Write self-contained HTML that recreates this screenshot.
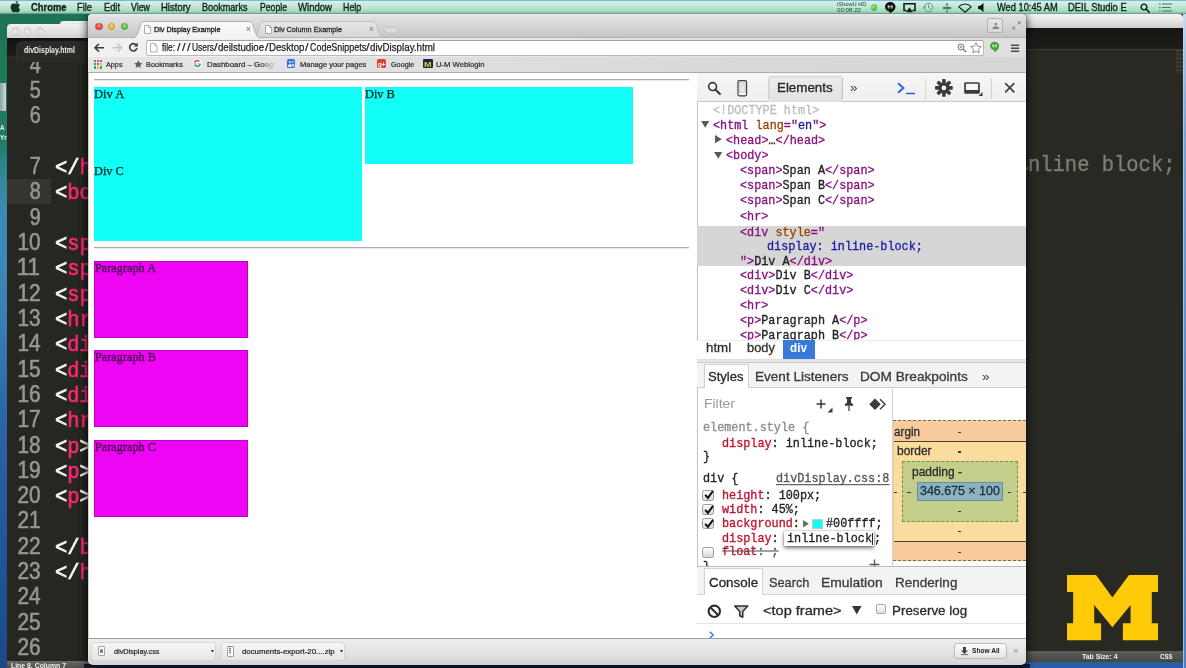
<!DOCTYPE html>
<html lang="en">
<head>
<meta charset="utf-8">
<title>Div Display Example</title>
<style>
*{box-sizing:border-box;margin:0;padding:0}
html,body{width:1186px;height:668px;overflow:hidden}
body{position:relative;font-family:"Liberation Sans",sans-serif;background:#1f4f86}
#root{position:absolute;left:0;top:0;width:1186px;height:668px;overflow:hidden;filter:blur(.55px)}
.a{position:absolute}
.t{position:absolute;white-space:pre;line-height:1}
svg{display:block;overflow:visible}

</style>
</head>
<body>
<div id="root">
<div class="a" style="left:0px;top:0px;width:1186px;height:668px;background:linear-gradient(180deg,#186348 0px,#1c7354 14px,#1e785a 60px,#207b60 140px,#2e8590 165px,#3c88ae 200px,#3f87b8 250px,#3a7eb6 320px,#2d69a8 400px,#23589b 520px,#1b4a88 668px);"></div>
<div class="a" style="left:0px;top:83px;width:6px;height:28px;background:linear-gradient(90deg,#9aa5a8,#e4e6e6);border-radius:0 1px 1px 0;opacity:.9"></div>
<span class="t" style="left:0.00px;transform-origin:0 0;top:125.00px;font-size:6.5px;color:#e8f0ee;font-weight:bold;">A</span>
<span class="t" style="left:0.00px;transform-origin:0 0;top:135.00px;font-size:6.5px;color:#e8f0ee;font-weight:bold;">Yr</span>
<div class="a" style="left:60px;top:21px;width:40px;height:6px;background:linear-gradient(180deg,#f2f2f2,#d9d9d9);border-radius:3px 0 0 0"></div>
<div class="a" style="left:7px;top:25px;width:95px;height:643px;background:#262721;border-radius:4px 0 0 0"></div>
<div class="a" style="left:7px;top:24.2px;width:95px;height:13.6px;background:linear-gradient(180deg,#f1f1f1 0,#e4e4e4 50%,#d2d2d2 100%);border-radius:4px 0 0 0;box-shadow:0 1px 0 #111"></div>
<div class="a" style="left:11.6px;top:27.4px;width:7.2px;height:7.2px;background:linear-gradient(180deg,#dcdcdc,#eeeeee);border-radius:50%;border:.8px solid #cbc6c6"></div>
<div class="a" style="left:24.2px;top:27.4px;width:7.2px;height:7.2px;background:linear-gradient(180deg,#dcdcdc,#eeeeee);border-radius:50%;border:.8px solid #cbc6c6"></div>
<div class="a" style="left:36.6px;top:27.4px;width:7.2px;height:7.2px;background:linear-gradient(180deg,#dcdcdc,#eeeeee);border-radius:50%;border:.8px solid #cbc6c6"></div>
<div class="a" style="left:7px;top:179px;width:43.5px;height:25.3px;background:#34352e;"></div>
<span class="t" style="right:1145.70px;transform-origin:100% 0;top:53.60px;font-size:23px;color:#96978f;transform:scale(0.8596,1.0);-webkit-text-stroke:.6px #96978f;">4</span>
<span class="t" style="right:1145.70px;transform-origin:100% 0;top:78.92px;font-size:23px;color:#96978f;transform:scale(0.8596,1.0);-webkit-text-stroke:.6px #96978f;">5</span>
<span class="t" style="right:1145.70px;transform-origin:100% 0;top:104.24px;font-size:23px;color:#96978f;transform:scale(0.8596,1.0);-webkit-text-stroke:.6px #96978f;">6</span>
<span class="t" style="right:1145.70px;transform-origin:100% 0;top:155.00px;font-size:23px;color:#96978f;transform:scale(0.8596,1.0);-webkit-text-stroke:.6px #96978f;">7</span>
<span class="t" style="left:54.60px;transform-origin:0 0;top:158.00px;font-size:22px;color:#f8f8f2;font-family:'Liberation Mono',monospace;transform:scaleX(.93);-webkit-text-stroke:.7px currentColor;">&lt;/<b style="font-weight:normal;color:#f92672">h</b></span>
<span class="t" style="right:1145.70px;transform-origin:100% 0;top:180.32px;font-size:23px;color:#96978f;transform:scale(0.8596,1.0);-webkit-text-stroke:.6px #96978f;">8</span>
<span class="t" style="left:54.60px;transform-origin:0 0;top:183.32px;font-size:22px;color:#f8f8f2;font-family:'Liberation Mono',monospace;transform:scaleX(.93);-webkit-text-stroke:.7px currentColor;">&lt;<b style="font-weight:normal;color:#f92672">bo</b></span>
<span class="t" style="right:1145.70px;transform-origin:100% 0;top:205.64px;font-size:23px;color:#96978f;transform:scale(0.8596,1.0);-webkit-text-stroke:.6px #96978f;">9</span>
<span class="t" style="right:1145.70px;transform-origin:100% 0;top:230.96px;font-size:23px;color:#96978f;transform:scale(0.9065,1.0);-webkit-text-stroke:.6px #96978f;">10</span>
<span class="t" style="left:54.60px;transform-origin:0 0;top:233.96px;font-size:22px;color:#f8f8f2;font-family:'Liberation Mono',monospace;transform:scaleX(.93);-webkit-text-stroke:.7px currentColor;">&lt;<b style="font-weight:normal;color:#f92672">sp</b></span>
<span class="t" style="right:1145.70px;transform-origin:100% 0;top:256.28px;font-size:23px;color:#96978f;transform:scale(0.9711,1.0);-webkit-text-stroke:.6px #96978f;">11</span>
<span class="t" style="left:54.60px;transform-origin:0 0;top:259.28px;font-size:22px;color:#f8f8f2;font-family:'Liberation Mono',monospace;transform:scaleX(.93);-webkit-text-stroke:.7px currentColor;">&lt;<b style="font-weight:normal;color:#f92672">sp</b></span>
<span class="t" style="right:1145.70px;transform-origin:100% 0;top:281.60px;font-size:23px;color:#96978f;transform:scale(0.9065,1.0);-webkit-text-stroke:.6px #96978f;">12</span>
<span class="t" style="left:54.60px;transform-origin:0 0;top:284.60px;font-size:22px;color:#f8f8f2;font-family:'Liberation Mono',monospace;transform:scaleX(.93);-webkit-text-stroke:.7px currentColor;">&lt;<b style="font-weight:normal;color:#f92672">sp</b></span>
<span class="t" style="right:1145.70px;transform-origin:100% 0;top:306.92px;font-size:23px;color:#96978f;transform:scale(0.9065,1.0);-webkit-text-stroke:.6px #96978f;">13</span>
<span class="t" style="left:54.60px;transform-origin:0 0;top:309.92px;font-size:22px;color:#f8f8f2;font-family:'Liberation Mono',monospace;transform:scaleX(.93);-webkit-text-stroke:.7px currentColor;">&lt;<b style="font-weight:normal;color:#f92672">hr</b></span>
<span class="t" style="right:1145.70px;transform-origin:100% 0;top:332.24px;font-size:23px;color:#96978f;transform:scale(0.9065,1.0);-webkit-text-stroke:.6px #96978f;">14</span>
<span class="t" style="left:54.60px;transform-origin:0 0;top:335.24px;font-size:22px;color:#f8f8f2;font-family:'Liberation Mono',monospace;transform:scaleX(.93);-webkit-text-stroke:.7px currentColor;">&lt;<b style="font-weight:normal;color:#f92672">di</b></span>
<span class="t" style="right:1145.70px;transform-origin:100% 0;top:357.56px;font-size:23px;color:#96978f;transform:scale(0.9065,1.0);-webkit-text-stroke:.6px #96978f;">15</span>
<span class="t" style="left:54.60px;transform-origin:0 0;top:360.56px;font-size:22px;color:#f8f8f2;font-family:'Liberation Mono',monospace;transform:scaleX(.93);-webkit-text-stroke:.7px currentColor;">&lt;<b style="font-weight:normal;color:#f92672">di</b></span>
<span class="t" style="right:1145.70px;transform-origin:100% 0;top:382.88px;font-size:23px;color:#96978f;transform:scale(0.9065,1.0);-webkit-text-stroke:.6px #96978f;">16</span>
<span class="t" style="left:54.60px;transform-origin:0 0;top:385.88px;font-size:22px;color:#f8f8f2;font-family:'Liberation Mono',monospace;transform:scaleX(.93);-webkit-text-stroke:.7px currentColor;">&lt;<b style="font-weight:normal;color:#f92672">di</b></span>
<span class="t" style="right:1145.70px;transform-origin:100% 0;top:408.20px;font-size:23px;color:#96978f;transform:scale(0.9065,1.0);-webkit-text-stroke:.6px #96978f;">17</span>
<span class="t" style="left:54.60px;transform-origin:0 0;top:411.20px;font-size:22px;color:#f8f8f2;font-family:'Liberation Mono',monospace;transform:scaleX(.93);-webkit-text-stroke:.7px currentColor;">&lt;<b style="font-weight:normal;color:#f92672">hr</b></span>
<span class="t" style="right:1145.70px;transform-origin:100% 0;top:433.52px;font-size:23px;color:#96978f;transform:scale(0.9065,1.0);-webkit-text-stroke:.6px #96978f;">18</span>
<span class="t" style="left:54.60px;transform-origin:0 0;top:436.52px;font-size:22px;color:#f8f8f2;font-family:'Liberation Mono',monospace;transform:scaleX(.93);-webkit-text-stroke:.7px currentColor;">&lt;<b style="font-weight:normal;color:#f92672">p<i style="font-style:normal;color:#f8f8f2">&gt;</i></b></span>
<span class="t" style="right:1145.70px;transform-origin:100% 0;top:458.84px;font-size:23px;color:#96978f;transform:scale(0.9065,1.0);-webkit-text-stroke:.6px #96978f;">19</span>
<span class="t" style="left:54.60px;transform-origin:0 0;top:461.84px;font-size:22px;color:#f8f8f2;font-family:'Liberation Mono',monospace;transform:scaleX(.93);-webkit-text-stroke:.7px currentColor;">&lt;<b style="font-weight:normal;color:#f92672">p<i style="font-style:normal;color:#f8f8f2">&gt;</i></b></span>
<span class="t" style="right:1145.70px;transform-origin:100% 0;top:484.16px;font-size:23px;color:#96978f;transform:scale(0.9065,1.0);-webkit-text-stroke:.6px #96978f;">20</span>
<span class="t" style="left:54.60px;transform-origin:0 0;top:487.16px;font-size:22px;color:#f8f8f2;font-family:'Liberation Mono',monospace;transform:scaleX(.93);-webkit-text-stroke:.7px currentColor;">&lt;<b style="font-weight:normal;color:#f92672">p<i style="font-style:normal;color:#f8f8f2">&gt;</i></b></span>
<span class="t" style="right:1145.70px;transform-origin:100% 0;top:509.48px;font-size:23px;color:#96978f;transform:scale(0.9065,1.0);-webkit-text-stroke:.6px #96978f;">21</span>
<span class="t" style="right:1145.70px;transform-origin:100% 0;top:534.80px;font-size:23px;color:#96978f;transform:scale(0.9065,1.0);-webkit-text-stroke:.6px #96978f;">22</span>
<span class="t" style="left:54.60px;transform-origin:0 0;top:537.80px;font-size:22px;color:#f8f8f2;font-family:'Liberation Mono',monospace;transform:scaleX(.93);-webkit-text-stroke:.7px currentColor;">&lt;/<b style="font-weight:normal;color:#f92672">b</b></span>
<span class="t" style="right:1145.70px;transform-origin:100% 0;top:560.12px;font-size:23px;color:#96978f;transform:scale(0.9065,1.0);-webkit-text-stroke:.6px #96978f;">23</span>
<span class="t" style="left:54.60px;transform-origin:0 0;top:563.12px;font-size:22px;color:#f8f8f2;font-family:'Liberation Mono',monospace;transform:scaleX(.93);-webkit-text-stroke:.7px currentColor;">&lt;/<b style="font-weight:normal;color:#f92672">h</b></span>
<span class="t" style="right:1145.70px;transform-origin:100% 0;top:585.44px;font-size:23px;color:#96978f;transform:scale(0.9065,1.0);-webkit-text-stroke:.6px #96978f;">24</span>
<span class="t" style="right:1145.70px;transform-origin:100% 0;top:610.76px;font-size:23px;color:#96978f;transform:scale(0.9065,1.0);-webkit-text-stroke:.6px #96978f;">25</span>
<span class="t" style="right:1145.70px;transform-origin:100% 0;top:636.08px;font-size:23px;color:#96978f;transform:scale(0.9065,1.0);-webkit-text-stroke:.6px #96978f;">26</span>
<div class="a" style="left:7px;top:38px;width:95px;height:23.5px;background:#272822;"></div>
<div class="a" style="left:7px;top:38px;width:95px;height:18px;background:linear-gradient(180deg,#121210,#1d1d1a);"></div>
<div class="a" style="left:17px;top:42px;width:90px;height:19.5px;background:#2a2b25;border-radius:6px 0 0 0;box-shadow:-1px -1px 1px rgba(90,90,80,.35)"></div>
<span class="t" style="left:23.60px;transform-origin:0 0;top:45.70px;font-size:8.6px;color:#ecece6;font-weight:bold;transform:scale(0.8111,1.0);">divDisplay.html</span>
<div class="a" style="left:7px;top:660.5px;width:95px;height:8px;background:linear-gradient(180deg,#6c6c6a,#4a4a48);"></div>
<span class="t" style="left:10.50px;transform-origin:0 0;top:661.80px;font-size:7.4px;color:#f0f0f0;font-weight:bold;transform:scale(0.9300,1.0);">Line 8, Column 7</span>
<div class="a" style="left:1020px;top:14px;width:163px;height:648px;background:#282923;"></div>
<div class="a" style="left:1020px;top:14px;width:163px;height:14px;background:linear-gradient(180deg,#f4f4f4 0,#e6e6e6 45%,#cdcdcd 100%);border-radius:0 4px 0 0"></div>
<div class="a" style="left:1020px;top:28px;width:163px;height:20.5px;background:linear-gradient(180deg,#151513,#1c1c19);"></div>
<div class="a" style="left:1020px;top:48.5px;width:163px;height:0.8px;background:#3a3a35;"></div>
<div class="a" style="left:1176px;top:50px;width:7px;height:24px;background:repeating-linear-gradient(180deg,#5a5b55 0,#5a5b55 1.500px,#34352f 1.500px,#34352f 4px);opacity:.55"></div>
<span class="t" style="left:1028.20px;transform-origin:0 0;top:155.30px;font-size:22px;color:#7e7e73;font-family:'Liberation Mono',monospace;transform:scale(0.9310,1.0);-webkit-text-stroke:.35px #7e7e73;">nline block;</span>
<div class="a" style="left:1026px;top:166.5px;width:1.6px;height:3.5px;background:#6a6a60;"></div>
<div class="a" style="left:1020px;top:651px;width:163px;height:11px;background:linear-gradient(180deg,#5d5d5b,#454543);"></div>
<span class="t" style="left:1081.80px;transform-origin:0 0;top:653.30px;font-size:7.2px;color:#f2f2f2;font-weight:bold;transform:scale(0.9591,1.0);">Tab Size: 4</span>
<span class="t" style="left:1159.80px;transform-origin:0 0;top:653.30px;font-size:7.2px;color:#f2f2f2;font-weight:bold;transform:scale(0.8457,1.0);">CSS</span>
<div class="a" style="left:1026px;top:662px;width:157px;height:6px;background:#2b5ca6;"></div>
<svg class="a" style="left:1066.5px;top:574.800px" width="91" height="65.200" viewBox="0 0 910 652"><path fill="#ffcb08" d="M0 0H291L454 224 620 0H910V170H848V482H910V652H559V482H636V300L454 522 272 300V482H341V652H0V482H62V170H0Z"/></svg>
<div class="a" style="left:1182.6px;top:14px;width:3.4px;height:654px;background:linear-gradient(180deg,#c9dcf0 0,#a4c2e6 6%,#7aa2d6 18%,#628ecb 50%,#4f7fc0 100%);border-left:.8px solid rgba(200,215,235,.7)"></div>
<div class="a" style="left:88px;top:14.3px;width:937.5999999999999px;height:650.7px;background:#fff;border-radius:4px 4px 5px 5px;box-shadow:0 2px 9px 1px rgba(0,0,0,.75),0 0 1px #000"></div>
<div class="a" style="left:88px;top:14.3px;width:937.5999999999999px;height:23px;background:linear-gradient(180deg,#ececec 0,#e0e0e0 15%,#d3d3d3 60%,#c6c6c6 100%);border-radius:4px 4px 0 0"></div>
<div class="a" style="left:95.3px;top:22.6px;width:7.4px;height:7.4px;background:radial-gradient(circle at 50% 30%,#ff8e86,#e8453c 70%);border-radius:50%;border:.7px solid #c9342c"></div>
<div class="a" style="left:107.89999999999999px;top:22.6px;width:7.4px;height:7.4px;background:radial-gradient(circle at 50% 30%,#ffd982,#f0b02a 70%);border-radius:50%;border:.7px solid #cf9421"></div>
<div class="a" style="left:120.6px;top:22.6px;width:7.4px;height:7.4px;background:radial-gradient(circle at 50% 30%,#a6e58b,#5bbf3f 70%);border-radius:50%;border:.7px solid #469d30"></div>
<svg class="a" style="left:250px;top:20.500px" width="140" height="17" viewBox="0 0 140 17"><defs><linearGradient id="g2" x1="0" y1="0" x2="0" y2="1"><stop offset="0" stop-color="#e6e6e6"/><stop offset="1" stop-color="#d5d5d5"/></linearGradient></defs><path d="M2 17 C6 17 7 14 8.500 9 L10 4 C10.800 1.200 12 .5 14 .5 H122.500 C124.500 .5 125.700 1.200 126.500 4 L128 9 C129.500 14 130.500 17 134.500 17Z" fill="url(#g2)" stroke="#b3b3b3" stroke-width=".7"/></svg>
<svg class="a" style="left:382.500px;top:25.800px" width="16.500" height="8" viewBox="0 0 20 9"><path d="M1 .8H14.500C15.500 .8 16 1.200 16.400 2.200L18.600 7.200C19 8 18.500 8.400 17.800 8.400H4.600C3.600 8.400 3.100 8 2.700 7L.5 2C.1 1.200.3.8 1 .8Z" fill="#dadada" stroke="#b2b2b2" stroke-width=".7"/></svg>
<div class="a" style="left:88px;top:37px;width:937.5999999999999px;height:19.5px;background:linear-gradient(90deg,#f1f1f1 0,#ededed 25%,#e2e2e2 60%,#dfdfdf 100%);border-top:.8px solid #b3b3b3"></div>
<svg class="a" style="left:132px;top:20.500px" width="134" height="17.500" viewBox="0 0 134 17.500"><defs><linearGradient id="g1" x1="0" y1="0" x2="0" y2="1"><stop offset="0" stop-color="#f8f8f8"/><stop offset="1" stop-color="#f2f2f2"/></linearGradient></defs><path d="M0 17 C4 17 5.500 14 7 9 L8.500 4 C9.300 1.200 10.500 .5 12.500 .5 H117 C119 .5 120.200 1.200 121 4 L122.500 9 C124 14 125.500 17 129.500 17 V17.500 H0Z" fill="url(#g1)"/><path d="M0 17 C4 17 5.500 14 7 9 L8.500 4 C9.300 1.200 10.500 .5 12.500 .5 H117 C119 .5 120.200 1.200 121 4 L122.500 9 C124 14 125.500 17 129.500 17" fill="none" stroke="#a3a3a3" stroke-width=".8"/></svg>
<svg class="a" style="left:144.2px;top:24.5px" width="7" height="9" viewBox="0 0 14 18"><path d="M1 1h8l4 4v12H1z" fill="#fdfdfd" stroke="#8d8d8d" stroke-width="1.400"/><path d="M9 1v4h4" fill="none" stroke="#8d8d8d" stroke-width="1.200"/></svg>
<span class="t" style="left:153.90px;transform-origin:0 0;top:25.60px;font-size:7.7px;color:#222;transform:scale(0.9433,1.0);-webkit-text-stroke:.32px #222;">Div Display Example</span>
<span class="t" style="left:245.50px;transform-origin:0 0;top:24.80px;font-size:9px;color:#6a6a6a;transform:scale(0.9496,1.0);">×</span>
<svg class="a" style="left:264.5px;top:24.5px" width="7" height="9" viewBox="0 0 14 18"><path d="M1 1h8l4 4v12H1z" fill="#fdfdfd" stroke="#8d8d8d" stroke-width="1.400"/><path d="M9 1v4h4" fill="none" stroke="#8d8d8d" stroke-width="1.200"/></svg>
<span class="t" style="left:274.30px;transform-origin:0 0;top:25.60px;font-size:7.7px;color:#2c2c2c;transform:scale(0.9473,1.0);-webkit-text-stroke:.3px #2c2c2c;">Div Column Example</span>
<span class="t" style="left:368.50px;transform-origin:0 0;top:24.80px;font-size:9px;color:#777;transform:scale(0.9496,1.0);">×</span>
<div class="a" style="left:987.4px;top:18.2px;width:15.8px;height:14.8px;background:linear-gradient(180deg,#e6e6e6,#d6d6d6);border:.8px solid #b2b2b2;border-radius:2px"></div>
<svg class="a" style="left:991.600px;top:22px" width="7.500" height="7.500" viewBox="0 0 15 15"><circle cx="7.500" cy="4" r="2.600" fill="#808080"/><path d="M1 14c0-4 3-5.500 6.500-5.500S14 10 14 14z" fill="#808080"/></svg>
<svg class="a" style="left:1011.500px;top:20.500px" width="9" height="9" viewBox="0 0 18 18"><path d="M10.500 1H17v6.500zM7.500 17H1v-6.500z" fill="#8a8a8a"/><path d="M16 2l-5 5M2 16l5-5" stroke="#8a8a8a" stroke-width="2"/></svg>
<svg class="a" style="left:93.800px;top:42.800px" width="10.500" height="9.500" viewBox="0 0 21 19"><path d="M10 1.500L2 9.500l8 8M2.500 9.500H20" fill="none" stroke="#3c3c3c" stroke-width="3.200"/></svg>
<svg class="a" style="left:111.500px;top:42.800px" width="10.500" height="9.500" viewBox="0 0 21 19"><path d="M11 1.500l8 8-8 8M18.500 9.500H1" fill="none" stroke="#c4c4c4" stroke-width="3.200"/></svg>
<svg class="a" style="left:127.800px;top:42.300px" width="10.500" height="10.500" viewBox="0 0 21 21"><path d="M16.500 6.200A7.300 7.300 0 1 0 17.800 12" fill="none" stroke="#3c3c3c" stroke-width="3.200"/><path d="M19.500 1v8h-8z" fill="#3c3c3c"/></svg>
<div class="a" style="left:145.5px;top:39.6px;width:838px;height:16px;background:#fff;border:.8px solid #b9b9b9;border-top-color:#a2a2a2;border-radius:2.500px"></div>
<svg class="a" style="left:150.300px;top:43px" width="7.500" height="9.500" viewBox="0 0 15 19"><path d="M1 1h8.500l4.500 4.500V18H1z" fill="#fff" stroke="#909090" stroke-width="1.400"/><path d="M9.500 1v4.500H14" fill="none" stroke="#909090" stroke-width="1.200"/></svg>
<span class="t" style="left:161.90px;transform-origin:0 0;top:42.30px;font-size:10.9px;color:#1c1c1c;transform:scale(0.7727,1.0);-webkit-text-stroke:.25px #1c1c1c;">file:</span>
<span class="t" style="left:192.00px;transform-origin:0 0;top:42.30px;font-size:10.9px;color:#1c1c1c;transform:scale(0.7732,1.0);-webkit-text-stroke:.25px #1c1c1c;">Users</span>
<span class="t" style="left:217.90px;transform-origin:0 0;top:42.30px;font-size:10.9px;color:#1c1c1c;transform:scale(0.8852,1.0);-webkit-text-stroke:.25px #1c1c1c;">deilstudioe</span>
<span class="t" style="left:269.00px;transform-origin:0 0;top:42.30px;font-size:10.9px;color:#1c1c1c;transform:scale(0.8885,1.0);-webkit-text-stroke:.25px #1c1c1c;">Desktop</span>
<span class="t" style="left:309.60px;transform-origin:0 0;top:42.30px;font-size:10.9px;color:#1c1c1c;transform:scale(0.8199,1.0);-webkit-text-stroke:.25px #1c1c1c;">CodeSnippets</span>
<span class="t" style="left:370.30px;transform-origin:0 0;top:42.30px;font-size:10.9px;color:#1c1c1c;transform:scale(0.8975,1.0);-webkit-text-stroke:.25px #1c1c1c;">divDisplay.html</span>
<span class="t" style="left:177.00px;transform-origin:0 0;top:42.30px;font-size:10.9px;color:#1c1c1c;-webkit-text-stroke:.2px #1c1c1c;transform:scaleX(1.15);">/</span>
<span class="t" style="left:181.90px;transform-origin:0 0;top:42.30px;font-size:10.9px;color:#1c1c1c;-webkit-text-stroke:.2px #1c1c1c;transform:scaleX(1.15);">/</span>
<span class="t" style="left:186.80px;transform-origin:0 0;top:42.30px;font-size:10.9px;color:#1c1c1c;-webkit-text-stroke:.2px #1c1c1c;transform:scaleX(1.15);">/</span>
<span class="t" style="left:214.40px;transform-origin:0 0;top:42.30px;font-size:10.9px;color:#1c1c1c;-webkit-text-stroke:.2px #1c1c1c;transform:scaleX(1.15);">/</span>
<span class="t" style="left:264.60px;transform-origin:0 0;top:42.30px;font-size:10.9px;color:#1c1c1c;-webkit-text-stroke:.2px #1c1c1c;transform:scaleX(1.15);">/</span>
<span class="t" style="left:305.20px;transform-origin:0 0;top:42.30px;font-size:10.9px;color:#1c1c1c;-webkit-text-stroke:.2px #1c1c1c;transform:scaleX(1.15);">/</span>
<span class="t" style="left:366.30px;transform-origin:0 0;top:42.30px;font-size:10.9px;color:#1c1c1c;-webkit-text-stroke:.2px #1c1c1c;transform:scaleX(1.15);">/</span>
<svg class="a" style="left:957px;top:43px" width="10" height="10" viewBox="0 0 20 20"><circle cx="8" cy="8" r="6" fill="none" stroke="#777" stroke-width="2"/><path d="M12.500 12.500l6 6" stroke="#777" stroke-width="2.600"/><path d="M5 8h6M8 5v6" stroke="#777" stroke-width="1.600"/></svg>
<svg class="a" style="left:969.500px;top:42px" width="12" height="11.500" viewBox="0 0 24 23"><path d="M12 1.500l3.200 6.800 7.300.9-5.400 5.100 1.400 7.400-6.500-3.700-6.500 3.700 1.400-7.400L1.500 9.200l7.300-.9z" fill="#fff" stroke="#7d7d7d" stroke-width="1.700" stroke-linejoin="round"/></svg>
<svg class="a" style="left:990.200px;top:41.200px" width="9.200" height="11.800" viewBox="0 0 21 24"><path fill="#43a738" d="M10.500 0C4.700 0 0 4.300 0 9.700c0 5 4.100 9.100 9.300 9.600V24c5.800-2.600 11.700-7.300 11.700-14.300C21 4.300 16.300 0 10.500 0z"/><path fill="#eaf6e8" d="M5.300 7h4v4c0 1.500-.8 2.500-2.200 2.800v-1.300c.5-.3.700-.8.700-1.500H5.300zM11.300 7h4v4c0 1.500-.8 2.500-2.200 2.800v-1.300c.5-.3.700-.8.700-1.500h-2.500z"/></svg>
<svg class="a" style="left:1011.200px;top:43.500px" width="8.200" height="8.400" viewBox="0 0 18 18"><path d="M0 2.500h18M0 9h18M0 15.500h18" stroke="#4a4a4a" stroke-width="3.200"/></svg>
<div class="a" style="left:88px;top:56.5px;width:937.5999999999999px;height:16.8px;background:linear-gradient(90deg,#e6e6e6 0,#e0e0e0 30%,#d9d9d9 70%,#d7d7d7 100%);border-bottom:.9px solid #adadad"></div>
<div class="a" style="left:93.6px;top:60.2px;width:2.2px;height:2.2px;background:#e8453c;"></div>
<div class="a" style="left:96.69999999999999px;top:60.2px;width:2.2px;height:2.2px;background:#3f83f8;"></div>
<div class="a" style="left:99.8px;top:60.2px;width:2.2px;height:2.2px;background:#e8453c;"></div>
<div class="a" style="left:93.6px;top:63.300000000000004px;width:2.2px;height:2.2px;background:#3f83f8;"></div>
<div class="a" style="left:96.69999999999999px;top:63.300000000000004px;width:2.2px;height:2.2px;background:#e8453c;"></div>
<div class="a" style="left:99.8px;top:63.300000000000004px;width:2.2px;height:2.2px;background:#f2b635;"></div>
<div class="a" style="left:93.6px;top:66.4px;width:2.2px;height:2.2px;background:#3aa757;"></div>
<div class="a" style="left:96.69999999999999px;top:66.4px;width:2.2px;height:2.2px;background:#f2b635;"></div>
<div class="a" style="left:99.8px;top:66.4px;width:2.2px;height:2.2px;background:#3aa757;"></div>
<span class="t" style="left:106.00px;transform-origin:0 0;top:61.00px;font-size:7.6px;color:#2d2d2d;transform:scale(0.9531,1.0);-webkit-text-stroke:.22px #2d2d2d;">Apps</span>
<svg class="a" style="left:134px;top:59.500px" width="8.500" height="8.500" viewBox="0 0 24 23"><path d="M12 0l3.500 7.600 8 .9-5.900 5.600 1.600 8.100L12 18.100 4.800 22.200l1.600-8.100L.5 8.500l8-.9z" fill="#5e5e5e"/></svg>
<span class="t" style="left:146.30px;transform-origin:0 0;top:61.00px;font-size:7.6px;color:#2d2d2d;transform:scale(0.9715,1.0);-webkit-text-stroke:.22px #2d2d2d;">Bookmarks</span>
<svg class="a" style="left:193px;top:59.300px" width="9" height="9" viewBox="0 0 18 18"><circle cx="9" cy="9" r="9" fill="#fff"/><path d="M9 3.200a5.800 5.800 0 1 0 5.700 6.800H9" fill="none" stroke="#4a86e8" stroke-width="2.400"/><path d="M3.900 6.200A5.800 5.800 0 0 1 13.200 5" fill="none" stroke="#e8453c" stroke-width="2.400"/><path d="M3.900 11.800A5.800 5.800 0 0 1 3.900 6.200" fill="none" stroke="#f2b635" stroke-width="2.400"/><path d="M3.900 11.800A5.800 5.800 0 0 0 12.500 13.600" fill="none" stroke="#3aa757" stroke-width="2.400"/></svg>
<span class="t" style="left:206.50px;transform-origin:0 0;top:61.00px;font-size:7.6px;color:#2d2d2d;transform:scale(1.0325,1.0);-webkit-text-stroke:.22px #2d2d2d;-webkit-mask-image:linear-gradient(90deg,#000 78%,transparent 100%);">Dashboard – Googl</span>
<div class="a" style="left:286.5px;top:59.3px;width:8.5px;height:9px;background:#3d6fd6;border-radius:1.500px"></div>
<svg class="a" style="left:287.500px;top:60.300px" width="6.500" height="7" viewBox="0 0 13 14"><circle cx="4" cy="4" r="2.200" fill="#dfe9fb"/><circle cx="9.500" cy="3.500" r="1.800" fill="#b9cdf3"/><path d="M0 14c0-4 1.500-6 4-6s4 2 4 6zM8 8c3-1 5 1 5 5H9.500z" fill="#dfe9fb"/></svg>
<span class="t" style="left:299.60px;transform-origin:0 0;top:61.00px;font-size:7.6px;color:#2d2d2d;transform:scale(0.9877,1.0);-webkit-text-stroke:.22px #2d2d2d;">Manage your pages</span>
<div class="a" style="left:376.8px;top:59.3px;width:9px;height:9px;background:#dc4437;border-radius:1.500px"></div>
<span class="t" style="left:377.60px;transform-origin:0 0;top:60.60px;font-size:7px;color:#fff;font-weight:bold;transform:scale(0.8836,1.0);">g+</span>
<span class="t" style="left:390.50px;transform-origin:0 0;top:61.00px;font-size:7.6px;color:#2d2d2d;transform:scale(0.9510,1.0);-webkit-text-stroke:.22px #2d2d2d;">Google</span>
<div class="a" style="left:423px;top:59.3px;width:9.5px;height:9px;background:#0d2a52;border-radius:1px"></div>
<span class="t" style="left:424.00px;transform-origin:0 0;top:61.00px;font-size:8px;color:#ffcb05;font-weight:bold;transform:scale(1.1241,1.0);">M</span>
<span class="t" style="left:436.20px;transform-origin:0 0;top:61.00px;font-size:7.6px;color:#2d2d2d;transform:scale(1.0087,1.0);-webkit-text-stroke:.22px #2d2d2d;">U-M Weblogin</span>
<div class="a" style="left:88px;top:73.3px;width:609px;height:565.2px;background:#fff;"></div>
<div class="a" style="left:88px;top:73.3px;width:1.2px;height:565px;background:#d0d0d0;"></div>
<div class="a" style="left:94.2px;top:78.8px;width:594.5px;height:2px;background:transparent;border-top:1px solid #ababab;border-bottom:1px solid #e9e9e9"></div>
<div class="a" style="left:94.2px;top:86.6px;width:267.4px;height:154.5px;background:#12fff7;"></div>
<div class="a" style="left:365px;top:86.6px;width:267.8px;height:77.3px;background:#12fff7;"></div>
<span class="t" style="left:94.20px;transform-origin:0 0;top:88.40px;font-size:12.5px;color:#052222;font-family:'Liberation Serif',serif;transform:scale(1.0027,1.0);-webkit-text-stroke:.25px #052222;">Div A</span>
<span class="t" style="left:365.00px;transform-origin:0 0;top:88.40px;font-size:12.5px;color:#052222;font-family:'Liberation Serif',serif;transform:scale(0.9861,1.0);-webkit-text-stroke:.25px #052222;">Div B</span>
<span class="t" style="left:94.20px;transform-origin:0 0;top:165.30px;font-size:12.5px;color:#052222;font-family:'Liberation Serif',serif;transform:scale(0.9861,1.0);-webkit-text-stroke:.25px #052222;">Div C</span>
<div class="a" style="left:94.2px;top:246.8px;width:594.5px;height:2px;background:transparent;border-top:1px solid #ababab;border-bottom:1px solid #e9e9e9"></div>
<div class="a" style="left:94.3px;top:261px;width:154.2px;height:77px;background:#ee05f3;box-shadow:inset 0 0 0 1px rgba(150,0,160,.55)"></div>
<span class="t" style="left:94.60px;transform-origin:0 0;top:261.70px;font-size:12.5px;color:#36003f;font-family:'Liberation Serif',serif;transform:scale(0.9816,1.0);filter:blur(.6px);-webkit-text-stroke:.4px #36003f;opacity:.85;">Paragraph A</span>
<div class="a" style="left:94.3px;top:350.4px;width:154.2px;height:77px;background:#ee05f3;box-shadow:inset 0 0 0 1px rgba(150,0,160,.55)"></div>
<span class="t" style="left:94.60px;transform-origin:0 0;top:351.10px;font-size:12.5px;color:#36003f;font-family:'Liberation Serif',serif;transform:scale(0.9816,1.0);filter:blur(.6px);-webkit-text-stroke:.4px #36003f;opacity:.85;">Paragraph B</span>
<div class="a" style="left:94.3px;top:439.8px;width:154.2px;height:77px;background:#ee05f3;box-shadow:inset 0 0 0 1px rgba(150,0,160,.55)"></div>
<span class="t" style="left:94.60px;transform-origin:0 0;top:440.50px;font-size:12.5px;color:#36003f;font-family:'Liberation Serif',serif;transform:scale(0.9816,1.0);filter:blur(.6px);-webkit-text-stroke:.4px #36003f;opacity:.85;">Paragraph C</span>
<div class="a" style="left:697.2px;top:73.3px;width:328.39999999999986px;height:565.2px;background:#fff;"></div>
<div class="a" style="left:696.6px;top:73.3px;width:1.1px;height:565.2px;background:#c2c2c2;"></div>
<div class="a" style="left:697.2px;top:73.3px;width:328.39999999999986px;height:28.5px;background:linear-gradient(180deg,#f6f6f6,#efefef);border-bottom:.9px solid #c9c9c9"></div>
<svg class="a" style="left:706.800px;top:81.300px" width="14" height="14" viewBox="0 0 25 25"><circle cx="10" cy="10" r="7" fill="none" stroke="#3b3b3b" stroke-width="3"/><path d="M15.500 15.500l7.500 7.500" stroke="#3b3b3b" stroke-width="3.800" stroke-linecap="round"/></svg>
<svg class="a" style="left:737.300px;top:79.800px" width="10.500" height="16.500" viewBox="0 0 17 28"><rect x="1.200" y="1.200" width="14.600" height="25.600" rx="2.500" fill="#fff" stroke="#3b3b3b" stroke-width="2"/><rect x="3.800" y="4.500" width="9.400" height="16" fill="#e9e9e9" stroke="#9a9a9a" stroke-width=".8"/><path d="M6 12l5-5" stroke="#aaa" stroke-width="1"/></svg>
<div class="a" style="left:768px;top:77.5px;width:0.9px;height:21px;background:#cfcfcf;"></div>
<div class="a" style="left:768.9px;top:76px;width:73px;height:25.8px;background:linear-gradient(180deg,#ececec,#e2e2e2);box-shadow:inset 0 1px 2px rgba(0,0,0,.12)"></div>
<div class="a" style="left:842px;top:77.5px;width:0.9px;height:21px;background:#c4c4c4;"></div>
<span class="t" style="left:776.90px;transform-origin:0 0;top:81.30px;font-size:13.6px;color:#262626;transform:scale(0.9811,1.0);-webkit-text-stroke:.32px #262626;">Elements</span>
<span class="t" style="left:850.20px;transform-origin:0 0;top:81.30px;font-size:13.5px;color:#3b3b3b;transform:scale(0.9979,1.0);">»</span>
<svg class="a" style="left:896.500px;top:81.500px" width="18.500" height="12.500" viewBox="0 0 37 25"><path d="M2 2.500l11 9.500-11 9.500" fill="none" stroke="#2d5fd0" stroke-width="3.600" stroke-linejoin="miter"/><path d="M18 23h18" stroke="#2d5fd0" stroke-width="3"/></svg>
<div class="a" style="left:925px;top:77.5px;width:0.9px;height:21px;background:#d6d6d6;"></div>
<svg class="a" style="left:934.800px;top:79.300px" width="17.800" height="17.800" viewBox="0 0 30 30"><g fill="#3b3b3b"><circle cx="15" cy="15" r="9.500"/><g id="tth"><rect x="12" y="0" width="6" height="30" rx="1.500"/></g><rect x="12" y="0" width="6" height="30" rx="1.500" transform="rotate(45 15 15)"/><rect x="12" y="0" width="6" height="30" rx="1.500" transform="rotate(90 15 15)"/><rect x="12" y="0" width="6" height="30" rx="1.500" transform="rotate(135 15 15)"/></g><circle cx="15" cy="15" r="4" fill="#f2f2f2"/></svg>
<svg class="a" style="left:964px;top:81.500px" width="19" height="14" viewBox="0 0 38 28"><rect x="2" y="2" width="28" height="20" rx="1.500" fill="#f5f5f5" stroke="#3b3b3b" stroke-width="3.400"/><rect x="2" y="16" width="28" height="6" fill="#3b3b3b"/><path d="M37 20v8h-8z" fill="#3b3b3b"/></svg>
<div class="a" style="left:990.5px;top:77.5px;width:0.9px;height:21px;background:#cfcfcf;"></div>
<svg class="a" style="left:1004px;top:82.300px" width="11.500" height="11.500" viewBox="0 0 20 20"><path d="M2 2l16 16M18 2L2 18" stroke="#3b3b3b" stroke-width="2.800"/></svg>
<div class="a" style="left:697.2px;top:225.6px;width:328.39999999999986px;height:40.8px;background:#d6d6d6;"></div>
<span class="t" style="left:712.80px;transform-origin:0 0;top:104.92px;font-size:11.8px;color:#bdbdbd;font-family:'Liberation Mono',monospace;transform:scale(1.0007,1.11);-webkit-text-stroke:.3px currentColor;">&lt;!DOCTYPE html&gt;</span>
<svg class="a" style="left:700.5px;top:121.39999999999999px" width="8.400" height="6.800" viewBox="0 0 12 10"><path d="M0 0h12L6 10z" fill="#5a5a5a"/></svg>
<span class="t" style="left:712.80px;transform-origin:0 0;top:119.52px;font-size:11.8px;color:#222;font-family:'Liberation Mono',monospace;transform:scale(1.0001,1.11);-webkit-text-stroke:.3px currentColor;"><i style="font-style:normal;color:#881280">&lt;html </i><i style="font-style:normal;color:#994500">lang</i><i style="font-style:normal;color:#881280">=</i><i style="font-style:normal;color:#881280">"</i><i style="font-style:normal;color:#1a1aa6">en</i><i style="font-style:normal;color:#881280">"&gt;</i></span>
<svg class="a" style="left:714.8px;top:135.4px" width="6.800" height="8.400" viewBox="0 0 10 12"><path d="M0 0v12l10-6z" fill="#5a5a5a"/></svg>
<span class="t" style="left:726.40px;transform-origin:0 0;top:134.62px;font-size:11.8px;color:#222;font-family:'Liberation Mono',monospace;transform:scale(1.0005,1.11);-webkit-text-stroke:.3px currentColor;"><i style="font-style:normal;color:#881280">&lt;head&gt;</i><i style="font-style:normal;color:#222">…</i><i style="font-style:normal;color:#881280">&lt;/head&gt;</i></span>
<svg class="a" style="left:713.6999999999999px;top:151.70000000000002px" width="8.400" height="6.800" viewBox="0 0 12 10"><path d="M0 0h12L6 10z" fill="#5a5a5a"/></svg>
<span class="t" style="left:726.40px;transform-origin:0 0;top:149.82px;font-size:11.8px;color:#222;font-family:'Liberation Mono',monospace;transform:scale(1.0006,1.11);-webkit-text-stroke:.3px currentColor;"><i style="font-style:normal;color:#881280">&lt;body&gt;</i></span>
<span class="t" style="left:739.50px;transform-origin:0 0;top:165.42px;font-size:11.8px;color:#222;font-family:'Liberation Mono',monospace;transform:scale(1.0006,1.11);-webkit-text-stroke:.3px currentColor;"><i style="font-style:normal;color:#881280">&lt;span&gt;</i><i style="font-style:normal;color:#222">Span A</i><i style="font-style:normal;color:#881280">&lt;/span&gt;</i></span>
<span class="t" style="left:739.50px;transform-origin:0 0;top:180.42px;font-size:11.8px;color:#222;font-family:'Liberation Mono',monospace;transform:scale(1.0006,1.11);-webkit-text-stroke:.3px currentColor;"><i style="font-style:normal;color:#881280">&lt;span&gt;</i><i style="font-style:normal;color:#222">Span B</i><i style="font-style:normal;color:#881280">&lt;/span&gt;</i></span>
<span class="t" style="left:739.50px;transform-origin:0 0;top:195.42px;font-size:11.8px;color:#222;font-family:'Liberation Mono',monospace;transform:scale(1.0006,1.11);-webkit-text-stroke:.3px currentColor;"><i style="font-style:normal;color:#881280">&lt;span&gt;</i><i style="font-style:normal;color:#222">Span C</i><i style="font-style:normal;color:#881280">&lt;/span&gt;</i></span>
<span class="t" style="left:739.50px;transform-origin:0 0;top:210.72px;font-size:11.8px;color:#222;font-family:'Liberation Mono',monospace;transform:scale(1.0004,1.11);-webkit-text-stroke:.3px currentColor;"><i style="font-style:normal;color:#881280">&lt;hr&gt;</i></span>
<span class="t" style="left:739.50px;transform-origin:0 0;top:226.62px;font-size:11.8px;color:#222;font-family:'Liberation Mono',monospace;transform:scale(1.0004,1.11);-webkit-text-stroke:.3px currentColor;"><i style="font-style:normal;color:#881280">&lt;div </i><i style="font-style:normal;color:#994500">style</i><i style="font-style:normal;color:#881280">="</i></span>
<span class="t" style="left:767.30px;transform-origin:0 0;top:241.42px;font-size:11.8px;color:#222;font-family:'Liberation Mono',monospace;transform:scale(1.0008,1.11);-webkit-text-stroke:.3px currentColor;"><i style="font-style:normal;color:#1a1aa6">display: inline-block;</i></span>
<span class="t" style="left:739.50px;transform-origin:0 0;top:255.52px;font-size:11.8px;color:#222;font-family:'Liberation Mono',monospace;transform:scale(1.0005,1.11);-webkit-text-stroke:.3px currentColor;"><i style="font-style:normal;color:#881280">"&gt;</i><i style="font-style:normal;color:#222">Div A</i><i style="font-style:normal;color:#881280">&lt;/div&gt;</i></span>
<span class="t" style="left:739.50px;transform-origin:0 0;top:270.12px;font-size:11.8px;color:#222;font-family:'Liberation Mono',monospace;transform:scale(1.0006,1.11);-webkit-text-stroke:.3px currentColor;"><i style="font-style:normal;color:#881280">&lt;div&gt;</i><i style="font-style:normal;color:#222">Div B</i><i style="font-style:normal;color:#881280">&lt;/div&gt;</i></span>
<span class="t" style="left:739.50px;transform-origin:0 0;top:285.12px;font-size:11.8px;color:#222;font-family:'Liberation Mono',monospace;transform:scale(1.0006,1.11);-webkit-text-stroke:.3px currentColor;"><i style="font-style:normal;color:#881280">&lt;div&gt;</i><i style="font-style:normal;color:#222">Div C</i><i style="font-style:normal;color:#881280">&lt;/div&gt;</i></span>
<span class="t" style="left:739.50px;transform-origin:0 0;top:300.12px;font-size:11.8px;color:#222;font-family:'Liberation Mono',monospace;transform:scale(1.0004,1.11);-webkit-text-stroke:.3px currentColor;"><i style="font-style:normal;color:#881280">&lt;hr&gt;</i></span>
<span class="t" style="left:739.50px;transform-origin:0 0;top:315.32px;font-size:11.8px;color:#222;font-family:'Liberation Mono',monospace;transform:scale(1.0006,1.11);-webkit-text-stroke:.3px currentColor;"><i style="font-style:normal;color:#881280">&lt;p&gt;</i><i style="font-style:normal;color:#222">Paragraph A</i><i style="font-style:normal;color:#881280">&lt;/p&gt;</i></span>
<span class="t" style="left:739.50px;transform-origin:0 0;top:329.92px;font-size:11.8px;color:#222;font-family:'Liberation Mono',monospace;transform:scale(1.0006,1.11);-webkit-text-stroke:.3px currentColor;"><i style="font-style:normal;color:#881280">&lt;p&gt;</i><i style="font-style:normal;color:#222">Paragraph B</i><i style="font-style:normal;color:#881280">&lt;/p&gt;</i></span>
<div class="a" style="left:697.2px;top:339.6px;width:328.39999999999986px;height:19.3px;background:#fff;border-top:.8px solid #ededed"></div>
<div class="a" style="left:783.2px;top:339.6px;width:32px;height:19.3px;background:#3879d9;"></div>
<span class="t" style="left:705.80px;transform-origin:0 0;top:342.20px;font-size:12.6px;color:#333;transform:scale(1.0548,1.0);-webkit-text-stroke:.3px currentColor;">html</span>
<span class="t" style="left:747.30px;transform-origin:0 0;top:342.20px;font-size:12.6px;color:#333;transform:scale(1.0215,1.0);-webkit-text-stroke:.3px currentColor;">body</span>
<span class="t" style="left:790.40px;transform-origin:0 0;top:342.20px;font-size:12.6px;color:#fff;font-weight:bold;transform:scale(0.9284,1.0);">div</span>
<div class="a" style="left:697.2px;top:358.9px;width:328.39999999999986px;height:3.6px;background:linear-gradient(180deg,#dcdcdc,#ececec);"></div>
<div class="a" style="left:697.2px;top:362.3px;width:328.39999999999986px;height:26.2px;background:#f3f3f3;border-top:.8px solid #c9c9c9;border-bottom:.8px solid #cfcfcf"></div>
<div class="a" style="left:703.5px;top:363.8px;width:45.7px;height:24.7px;background:#fff;border:.8px solid #d0d0d0;border-bottom:none"></div>
<span class="t" style="left:708.20px;transform-origin:0 0;top:369.80px;font-size:13px;color:#2a2a2a;transform:scale(0.9998,1.0);-webkit-text-stroke:.3px currentColor;">Styles</span>
<span class="t" style="left:754.70px;transform-origin:0 0;top:369.80px;font-size:13px;color:#3a3a3a;transform:scale(1.0434,1.0);-webkit-text-stroke:.3px currentColor;">Event Listeners</span>
<span class="t" style="left:859.90px;transform-origin:0 0;top:369.80px;font-size:13px;color:#3a3a3a;transform:scale(1.0507,1.0);-webkit-text-stroke:.3px currentColor;">DOM Breakpoints</span>
<span class="t" style="left:982.00px;transform-origin:0 0;top:370.00px;font-size:13.5px;color:#3b3b3b;transform:scale(0.9979,1.0);">»</span>
<div class="a" style="left:892.3px;top:388.5px;width:0.9px;height:177px;background:#cfcfcf;"></div>
<span class="t" style="left:703.50px;transform-origin:0 0;top:397.00px;font-size:13px;color:#9a9a9a;transform:scale(1.0730,1.0);">Filter</span>
<svg class="a" style="left:815.500px;top:398.500px" width="17" height="14" viewBox="0 0 34 28"><path d="M10 1v18M1 10h18" stroke="#3b3b3b" stroke-width="3"/><path d="M33 17v10H23z" fill="#3b3b3b"/></svg>
<svg class="a" style="left:843.800px;top:396.500px" width="10" height="14.500" viewBox="0 0 20 29"><path d="M4 0h12v2.500l-2 1.500v7l4.500 4v2.500H1.500V15L6 11V4L4 2.500z" fill="#3b3b3b"/><path d="M10 17v11" stroke="#3b3b3b" stroke-width="2.600"/></svg>
<svg class="a" style="left:868.500px;top:397.500px" width="17" height="12.500" viewBox="0 0 34 25"><path d="M12 1l11.500 11.500L12 24 .5 12.500z" fill="#3b3b3b"/><path d="M22 2.500l10 10-10 10" fill="none" stroke="#3b3b3b" stroke-width="2.800"/></svg>
<span class="t" style="left:702.70px;transform-origin:0 0;top:422.02px;font-size:11.8px;color:#8a8a8a;font-family:'Liberation Mono',monospace;transform:scale(1.0007,1.11);-webkit-text-stroke:.3px currentColor;">element.style {</span>
<span class="t" style="left:721.70px;transform-origin:0 0;top:438.12px;font-size:11.8px;color:#222;font-family:'Liberation Mono',monospace;transform:scale(1.0007,1.11);-webkit-text-stroke:.3px currentColor;"><i style="font-style:normal;color:#c4102c">display</i>: inline-block;</span>
<span class="t" style="left:702.70px;transform-origin:0 0;top:451.42px;font-size:11.8px;color:#222;font-family:'Liberation Mono',monospace;transform:scale(0.9988,1.11);-webkit-text-stroke:.3px currentColor;">}</span>
<span class="t" style="left:702.70px;transform-origin:0 0;top:473.42px;font-size:11.8px;color:#222;font-family:'Liberation Mono',monospace;transform:scale(1.0005,1.11);-webkit-text-stroke:.3px currentColor;">div {</span>
<span class="t" style="left:776.30px;transform-origin:0 0;top:473.42px;font-size:11.8px;color:#555;font-family:'Liberation Mono',monospace;transform:scale(1.0007,1.11);-webkit-text-stroke:.3px currentColor;text-decoration:underline;text-decoration-thickness:.8px;text-underline-offset:1.500px;">divDisplay.css:8</span>
<div class="a" style="left:702.4px;top:489.6px;width:11.6px;height:11px;background:linear-gradient(180deg,#fdfdfd,#d9d9d9);border:.8px solid #9a9a9a;border-radius:2.500px"></div>
<svg class="a" style="left:704px;top:490.40000000000003px" width="10" height="9.200" viewBox="0 0 18 17"><path d="M2 9l5 5.500L16.500 1.500" fill="none" stroke="#141414" stroke-width="3.800"/></svg>
<div class="a" style="left:702.4px;top:503.8px;width:11.6px;height:11px;background:linear-gradient(180deg,#fdfdfd,#d9d9d9);border:.8px solid #9a9a9a;border-radius:2.500px"></div>
<svg class="a" style="left:704px;top:504.6px" width="10" height="9.200" viewBox="0 0 18 17"><path d="M2 9l5 5.500L16.500 1.500" fill="none" stroke="#141414" stroke-width="3.800"/></svg>
<div class="a" style="left:702.4px;top:518px;width:11.6px;height:11px;background:linear-gradient(180deg,#fdfdfd,#d9d9d9);border:.8px solid #9a9a9a;border-radius:2.500px"></div>
<svg class="a" style="left:704px;top:518.8px" width="10" height="9.200" viewBox="0 0 18 17"><path d="M2 9l5 5.500L16.500 1.500" fill="none" stroke="#141414" stroke-width="3.800"/></svg>
<div class="a" style="left:702.4px;top:546.8px;width:11.6px;height:11px;background:linear-gradient(180deg,#fdfdfd,#d9d9d9);border:.8px solid #9a9a9a;border-radius:2.500px"></div>
<span class="t" style="left:721.70px;transform-origin:0 0;top:490.02px;font-size:11.8px;color:#222;font-family:'Liberation Mono',monospace;transform:scale(1.0007,1.11);-webkit-text-stroke:.3px currentColor;"><i style="font-style:normal;color:#c4102c">height</i>: 100px;</span>
<span class="t" style="left:721.70px;transform-origin:0 0;top:504.22px;font-size:11.8px;color:#222;font-family:'Liberation Mono',monospace;transform:scale(1.0006,1.11);-webkit-text-stroke:.3px currentColor;"><i style="font-style:normal;color:#c4102c">width</i>: 45%;</span>
<span class="t" style="left:721.70px;transform-origin:0 0;top:518.42px;font-size:11.8px;color:#222;font-family:'Liberation Mono',monospace;transform:scale(1.0006,1.11);-webkit-text-stroke:.3px currentColor;"><i style="font-style:normal;color:#c4102c">background</i>:</span>
<svg class="a" style="left:802.500px;top:519.700px" width="6" height="7.500" viewBox="0 0 12 15"><path d="M0 0v15l12-7.500z" fill="#6e6e6e"/></svg>
<div class="a" style="left:812.3px;top:518.6px;width:11.2px;height:10.3px;background:#1bf6f1;border:.6px solid #9fd6d6"></div>
<span class="t" style="left:826.10px;transform-origin:0 0;top:517.31px;font-size:11.6px;color:#222;font-family:'Liberation Mono',monospace;transform:scale(1.0181,1.11);-webkit-text-stroke:.3px currentColor;">#00ffff;</span>
<span class="t" style="left:721.70px;transform-origin:0 0;top:532.52px;font-size:11.8px;color:#222;font-family:'Liberation Mono',monospace;transform:scale(1.0004,1.11);-webkit-text-stroke:.3px currentColor;"><i style="font-style:normal;color:#c4102c">display</i>:</span>
<div class="a" style="left:783.6px;top:530.8px;width:90.5px;height:15.2px;background:#fff;box-shadow:0 1.500px 4px rgba(0,0,0,.55),0 0 1px rgba(0,0,0,.5)"></div>
<span class="t" style="left:787.10px;transform-origin:0 0;top:532.52px;font-size:11.8px;color:#222;font-family:'Liberation Mono',monospace;transform:scale(1.0008,1.11);-webkit-text-stroke:.3px currentColor;">inline-block</span>
<div class="a" style="left:872.3px;top:532.5px;width:0.9px;height:12px;background:#222;"></div>
<span class="t" style="left:874.30px;transform-origin:0 0;top:532.52px;font-size:11.8px;color:#222;font-family:'Liberation Mono',monospace;transform:scale(0.9988,1.11);-webkit-text-stroke:.3px currentColor;">;</span>
<span class="t" style="left:721.70px;transform-origin:0 0;top:546.42px;font-size:11.8px;color:#555;font-family:'Liberation Mono',monospace;transform:scale(1.0004,1.11);-webkit-text-stroke:.3px currentColor;text-decoration:line-through;text-decoration-thickness:.7px;"><i style="font-style:normal;color:#c4102c">float</i>: ;</span>
<span class="t" style="left:702.70px;transform-origin:0 0;top:560.62px;font-size:11.8px;color:#222;font-family:'Liberation Mono',monospace;transform:scale(0.9988,1.11);-webkit-text-stroke:.3px currentColor;">}</span>
<svg class="a" style="left:868.500px;top:558.500px" width="11" height="11" viewBox="0 0 22 22"><path d="M11 1v20M1 11h20" stroke="#555" stroke-width="2.600"/></svg>
<div class="a" style="left:892.9px;top:420.4px;width:132.69999999999993px;height:141px;background:#f8cb9c;border-top:1.200px dashed rgba(90,70,50,.75);border-bottom:1.200px dashed rgba(90,70,50,.75)"></div>
<div class="a" style="left:893.8px;top:441.4px;width:131.79999999999995px;height:100.3px;background:#fbdc9f;border-top:.9px solid #4e4232;border-bottom:.9px solid #4e4232"></div>
<div class="a" style="left:901.7px;top:461.2px;width:116.3px;height:60.7px;background:#c2ce89;border:.9px dashed rgba(80,92,50,.6)"></div>
<div class="a" style="left:916.6px;top:481.7px;width:86.5px;height:19.3px;background:#8ab3bf;border:1px solid #6b8d98"></div>
<span class="t" style="left:893.50px;transform-origin:0 0;top:425.50px;font-size:12px;color:#2a2a2a;transform:scale(0.9742,1.0);-webkit-text-stroke:.28px currentColor;">argin</span>
<span class="t" style="left:897.30px;transform-origin:0 0;top:445.20px;font-size:12px;color:#2a2a2a;transform:scale(0.9975,1.0);-webkit-text-stroke:.28px currentColor;">border</span>
<span class="t" style="left:911.60px;transform-origin:0 0;top:465.50px;font-size:12px;color:#2a2a2a;transform:scale(0.9971,1.0);-webkit-text-stroke:.28px currentColor;">padding -</span>
<span class="t" style="left:920.00px;transform-origin:0 0;top:485.30px;font-size:12.2px;color:#1c2c3c;transform:scale(1.0194,1.0);-webkit-text-stroke:.28px currentColor;">346.675 × 100</span>
<div class="a" style="left:957.8000000000001px;top:431.59999999999997px;width:3.6px;height:1.3px;background:#3a3a3a;"></div>
<div class="a" style="left:957.8000000000001px;top:451.4px;width:3.6px;height:1.3px;background:#3a3a3a;"></div>
<div class="a" style="left:907.4000000000001px;top:492.0px;width:3.6px;height:1.3px;background:#3a3a3a;"></div>
<div class="a" style="left:1007.9000000000001px;top:492.0px;width:3.6px;height:1.3px;background:#3a3a3a;"></div>
<div class="a" style="left:893.5px;top:492.0px;width:3.6px;height:1.3px;background:#3a3a3a;"></div>
<div class="a" style="left:1022.5px;top:492.0px;width:3.6px;height:1.3px;background:#3a3a3a;"></div>
<div class="a" style="left:957.8000000000001px;top:511.2px;width:3.6px;height:1.3px;background:#3a3a3a;"></div>
<div class="a" style="left:957.8000000000001px;top:531.1999999999999px;width:3.6px;height:1.3px;background:#3a3a3a;"></div>
<div class="a" style="left:957.8000000000001px;top:552.0px;width:3.6px;height:1.3px;background:#3a3a3a;"></div>
<div class="a" style="left:697.2px;top:565.8px;width:328.39999999999986px;height:29.6px;background:#f3f3f3;border-top:.9px solid #bdbdbd;border-bottom:.8px solid #d4d4d4"></div>
<div class="a" style="left:704px;top:567.6px;width:58.8px;height:27.8px;background:#fff;border:.8px solid #d2d2d2;border-bottom:none"></div>
<span class="t" style="left:708.60px;transform-origin:0 0;top:575.90px;font-size:13.3px;color:#262626;transform:scale(1.0062,1.0);-webkit-text-stroke:.3px currentColor;">Console</span>
<span class="t" style="left:769.00px;transform-origin:0 0;top:575.90px;font-size:13.3px;color:#3a3a3a;transform:scale(0.9587,1.0);-webkit-text-stroke:.3px currentColor;">Search</span>
<span class="t" style="left:820.70px;transform-origin:0 0;top:575.90px;font-size:13.3px;color:#3a3a3a;transform:scale(1.0416,1.0);-webkit-text-stroke:.3px currentColor;">Emulation</span>
<span class="t" style="left:894.70px;transform-origin:0 0;top:575.90px;font-size:13.3px;color:#3a3a3a;transform:scale(1.0170,1.0);-webkit-text-stroke:.3px currentColor;">Rendering</span>
<div class="a" style="left:697.2px;top:595.4px;width:328.39999999999986px;height:43.1px;background:#fff;"></div>
<svg class="a" style="left:706.900px;top:603.600px" width="14.600" height="14.600" viewBox="0 0 27 27"><circle cx="13.500" cy="13.500" r="10.500" fill="none" stroke="#2e2e2e" stroke-width="3.800"/><path d="M6 6l15 15" stroke="#2e2e2e" stroke-width="3.800"/></svg>
<svg class="a" style="left:734.300px;top:604.500px" width="14.500" height="13" viewBox="0 0 29 26"><path d="M1.500 2h26L17.500 13v11.500l-6-3V13z" fill="#c9c9c9" stroke="#2e2e2e" stroke-width="3" stroke-linejoin="round"/></svg>
<span class="t" style="left:763.40px;transform-origin:0 0;top:603.60px;font-size:13.6px;color:#2a2a2a;transform:scale(1.0708,1.0);-webkit-text-stroke:.3px currentColor;">&lt;top frame&gt;</span>
<svg class="a" style="left:852px;top:605.500px" width="9.500" height="8.500" viewBox="0 0 19 17"><path d="M0 0h19L9.500 17z" fill="#333"/></svg>
<div class="a" style="left:875.8px;top:603.8px;width:10.7px;height:10.7px;background:linear-gradient(180deg,#fff,#e2e2e2);border:.8px solid #a5a5a5;border-radius:2px"></div>
<span class="t" style="left:891.90px;transform-origin:0 0;top:603.60px;font-size:13.6px;color:#2a2a2a;transform:scale(0.9841,1.0);-webkit-text-stroke:.3px currentColor;">Preserve log</span>
<div class="a" style="left:697.2px;top:623.4px;width:328.39999999999986px;height:0.9px;background:#e3e3e3;"></div>
<svg class="a" style="left:708.500px;top:630.500px" width="5.500" height="8" viewBox="0 0 11 16"><path d="M1.500 1.500l7 6.500-7 6.500" fill="none" stroke="#3a6fd8" stroke-width="2.600"/></svg>
<div class="a" style="left:84px;top:664px;width:946px;height:4px;background:linear-gradient(180deg,rgba(8,12,24,.9),rgba(8,12,24,.7));filter:blur(.6px)"></div>
<div class="a" style="left:88px;top:638.4px;width:937.5999999999999px;height:26.6px;background:linear-gradient(180deg,#efefef 0,#e6e6e6 40%,#d4d4d4 100%);border-top:1px solid #9d9d9d;border-radius:0 0 5px 5px"></div>
<div class="a" style="left:91px;top:641.8px;width:125px;height:18.8px;background:linear-gradient(180deg,#f6f6f6,#e6e6e6);border:.8px solid #d6d6d6;border-radius:3px"></div>
<span class="t" style="left:113.70px;transform-origin:0 0;top:648.00px;font-size:7.6px;color:#262626;transform:scale(0.9570,1.0);-webkit-text-stroke:.22px #262626;">divDisplay.css</span>
<svg class="a" style="left:210.8px;top:650.200px" width="3" height="2.600" viewBox="0 0 12 10"><path d="M0 0h12L6 10z" fill="#222"/></svg>
<div class="a" style="left:221px;top:641.8px;width:124.19999999999999px;height:18.8px;background:linear-gradient(180deg,#f6f6f6,#e6e6e6);border:.8px solid #d6d6d6;border-radius:3px"></div>
<span class="t" style="left:242.20px;transform-origin:0 0;top:648.00px;font-size:7.6px;color:#262626;transform:scale(1.0311,1.0);-webkit-text-stroke:.22px #262626;">documents-export-20....zip</span>
<svg class="a" style="left:340.0px;top:650.200px" width="3" height="2.600" viewBox="0 0 12 10"><path d="M0 0h12L6 10z" fill="#222"/></svg>
<div class="a" style="left:97.8px;top:646.3px;width:7px;height:9.5px;background:#fafafa;border:.7px solid #a6a6a6;border-radius:1px"></div>
<div class="a" style="left:99.5px;top:649px;width:3.6px;height:3.6px;background:#777;border-radius:50%"></div>
<div class="a" style="left:226.5px;top:645.8px;width:7.5px;height:11px;background:#fcfcfc;border:.7px solid #a0a0a0;border-radius:1px"></div>
<div class="a" style="left:229.3px;top:646px;width:1.6px;height:8px;background:repeating-linear-gradient(180deg,#777 0,#777 1px,#ddd 1px,#ddd 2px);"></div>
<div class="a" style="left:953.5px;top:642.5px;width:53.6px;height:16.5px;background:linear-gradient(180deg,#fdfdfd,#e4e4e4);border:.8px solid #bdbdbd;border-radius:3px"></div>
<svg class="a" style="left:960.800px;top:646.500px" width="7" height="8" viewBox="0 0 14 16"><path d="M4 0h6v7h4L7 14 0 7h4z" fill="#444"/><path d="M0 15.200h14" stroke="#444" stroke-width="1.600"/></svg>
<span class="t" style="left:971.80px;transform-origin:0 0;top:647.30px;font-size:7.6px;color:#222;font-weight:bold;transform:scale(0.8716,1.0);">Show All</span>
<span class="t" style="left:1013.30px;transform-origin:0 0;top:646.00px;font-size:9.5px;color:#8a8a8a;transform:scale(0.9888,1.0);">×</span>
<div class="a" style="left:0px;top:0px;width:1186px;height:14px;background:linear-gradient(180deg,#86b4e4 0px,#86b4e4 1px,#d2f1e4 1.5px,#c6ebda 5px,#aedcc6 10.5px,#93caaf 12.6px,#4f8f74 14px);"></div>
<svg class="a" style="left:10px;top:1px" width="11" height="12" viewBox="0 0 22 24"><path fill="#16342a" d="M15.6 0c.1 1.3-.4 2.6-1.2 3.5-.8 1-2.100 1.700-3.300 1.600-.2-1.200.4-2.500 1.200-3.400C13.100.8 14.500.100 15.600 0zM19.800 8.300c-1.500.9-2.400 2.300-2.400 4 0 2 1.200 3.600 3 4.300-.4 1.200-.9 2.300-1.600 3.300-1 1.400-2 2.900-3.600 2.900-1.500 0-2-.9-3.800-.9s-2.400.9-3.800.9c-1.600.1-2.800-1.600-3.800-3C1.600 16.700.1 11.500 2.300 8c1-1.700 2.900-2.800 4.900-2.800 1.500 0 3 1 3.900 1s2.700-1.300 4.500-1.100c.800 0 3 .3 4.200 3.200z"/></svg>
<span class="t" style="left:31.00px;transform-origin:0 0;top:2.60px;font-size:10.4px;color:#0f261e;font-weight:bold;transform:scale(0.9041,1.0);-webkit-text-stroke:.38px #0f261e;">Chrome</span>
<span class="t" style="left:77.30px;transform-origin:0 0;top:2.60px;font-size:10.4px;color:#0f261e;transform:scale(0.8955,1.0);-webkit-text-stroke:.38px #0f261e;">File</span>
<span class="t" style="left:103.50px;transform-origin:0 0;top:2.60px;font-size:10.4px;color:#0f261e;transform:scale(0.8935,1.0);-webkit-text-stroke:.38px #0f261e;">Edit</span>
<span class="t" style="left:130.50px;transform-origin:0 0;top:2.60px;font-size:10.4px;color:#0f261e;transform:scale(0.8503,1.0);-webkit-text-stroke:.38px #0f261e;">View</span>
<span class="t" style="left:161.40px;transform-origin:0 0;top:2.60px;font-size:10.4px;color:#0f261e;transform:scale(0.9152,1.0);-webkit-text-stroke:.38px #0f261e;">History</span>
<span class="t" style="left:202.40px;transform-origin:0 0;top:2.60px;font-size:10.4px;color:#0f261e;transform:scale(0.8755,1.0);-webkit-text-stroke:.38px #0f261e;">Bookmarks</span>
<span class="t" style="left:260.00px;transform-origin:0 0;top:2.60px;font-size:10.4px;color:#0f261e;transform:scale(0.8344,1.0);-webkit-text-stroke:.38px #0f261e;">People</span>
<span class="t" style="left:298.30px;transform-origin:0 0;top:2.60px;font-size:10.4px;color:#0f261e;transform:scale(0.9197,1.0);-webkit-text-stroke:.38px #0f261e;">Window</span>
<span class="t" style="left:343.30px;transform-origin:0 0;top:2.60px;font-size:10.4px;color:#0f261e;transform:scale(0.8515,1.0);-webkit-text-stroke:.38px #0f261e;">Help</span>
<span class="t" style="left:836.60px;transform-origin:0 0;top:2.20px;font-size:5.2px;color:#24403a;transform:scale(1.1002,1.0);">iShowU HD</span>
<span class="t" style="left:836.60px;transform-origin:0 0;top:7.60px;font-size:5.6px;color:#24403a;transform:scale(1.1019,1.0);">00:08:22</span>
<div class="a" style="left:870.6px;top:4.1px;width:6.6px;height:6.6px;background:radial-gradient(circle at 40% 35%,#9be37a,#4fb53e 70%,#3a9a30);border-radius:50%"></div>
<svg class="a" style="left:884.5px;top:1.8px" width="10.5" height="11.5" viewBox="0 0 21 23"><path fill="#0b0f0d" d="M10.500 0C4.700 0 0 4.300 0 9.700c0 5 4.100 9.100 9.300 9.600V23c5.800-2.600 11.700-7.300 11.700-13.300C21 4.300 16.300 0 10.500 0z"/><path fill="#d9efe4" d="M5.300 7h4v4c0 1.500-.8 2.500-2.200 2.800v-1.300c.5-.3.700-.8.700-1.500H5.300zM11.300 7h4v4c0 1.500-.8 2.500-2.200 2.800v-1.300c.5-.3.700-.8.700-1.500h-2.500z"/></svg>
<svg class="a" style="left:902.5px;top:3px" width="13" height="9.500" viewBox="0 0 26 19"><path fill="none" stroke="#0b1712" stroke-width="3" d="M7 15H2V1.500h22V15h-5"/><path fill="#0b1712" d="M13 9l7 9.500H6z"/></svg>
<svg class="a" style="left:922.5px;top:2px" width="11" height="11" viewBox="0 0 22 22"><circle cx="11" cy="11" r="8.500" fill="none" stroke="#6f8f82" stroke-width="2"/><path d="M11 5.500V11l4 2.500" fill="none" stroke="#6f8f82" stroke-width="2"/><path d="M0 9l3.500 4L6.500 9z" fill="#6f8f82"/></svg>
<svg class="a" style="left:941.5px;top:2.500px" width="10" height="10" viewBox="0 0 20 20"><path fill="#52776a" d="M10 0l3 3.500h-2V8h4.500V6L19 10l-3.500 4v-2H11v4.500h2L10 20l-3-3.500h2V12H4.500v2L1 10l3.500-4v2H9V3.500H7z"/></svg>
<svg class="a" style="left:958px;top:2.500px" width="14" height="10" viewBox="0 0 28 20"><path fill="none" stroke="#102820" stroke-width="2.200" stroke-linejoin="round" d="M1.500 7.500C8 0 20 0 26.500 7.500L14 18.500z"/></svg>
<svg class="a" style="left:977.5px;top:3px" width="6" height="9" viewBox="0 0 12 18"><path fill="#0b1712" d="M11 0v18L3.500 12H0V6h3.500z"/></svg>
<span class="t" style="left:996.80px;transform-origin:0 0;top:2.60px;font-size:10.4px;color:#0f261e;transform:scale(0.8931,1.0);-webkit-text-stroke:.38px #0f261e;">Wed 10:45 AM</span>
<span class="t" style="left:1068.00px;transform-origin:0 0;top:2.60px;font-size:10.4px;color:#0f261e;transform:scale(0.9046,1.0);-webkit-text-stroke:.38px #0f261e;">DEIL Studio E</span>
<svg class="a" style="left:1139.5px;top:2.500px" width="10" height="10" viewBox="0 0 20 20"><circle cx="8" cy="8" r="5.800" fill="none" stroke="#0b1712" stroke-width="2.800"/><path d="M12.500 12.500L18.500 18.500" stroke="#0b1712" stroke-width="3.200" stroke-linecap="round"/></svg>
<svg class="a" style="left:1158.5px;top:3px" width="13" height="9" viewBox="0 0 26 18"><g stroke="#4e6f64" stroke-width="2.200"><path d="M6 2h20M6 9h17M6 16h20"/></g><g fill="#4e6f64"><circle cx="1.800" cy="2" r="1.600"/><circle cx="1.800" cy="9" r="1.600"/><circle cx="1.800" cy="16" r="1.600"/></g></svg>
</div>
</body>
</html>
